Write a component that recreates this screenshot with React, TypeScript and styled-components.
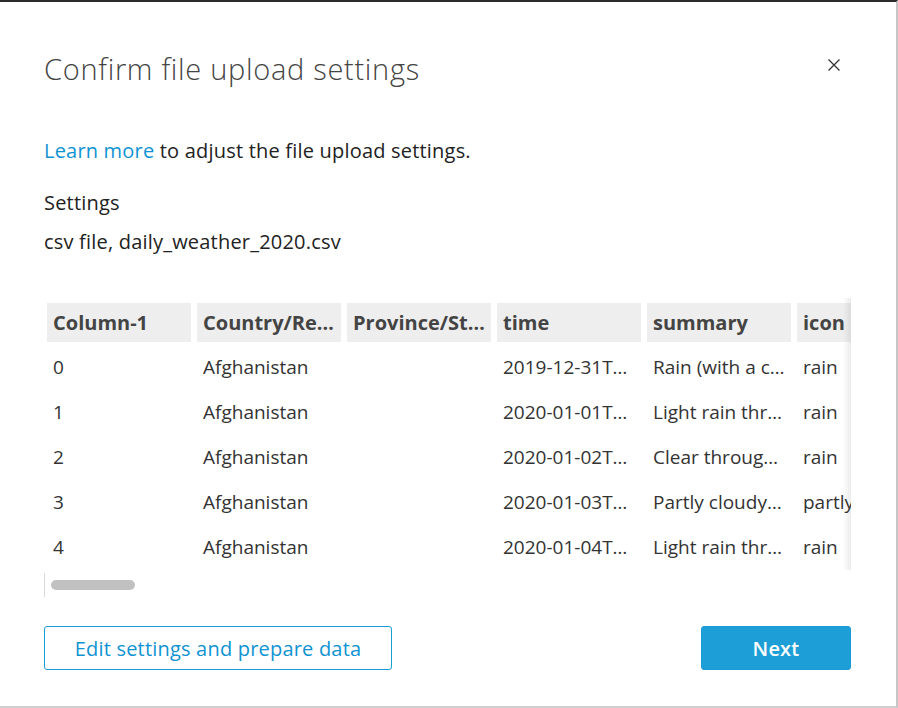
import styled, { createGlobalStyle } from "styled-components";

const GlobalStyle = createGlobalStyle`
html, body {
  margin: 0;
  padding: 0;
  background: #ffffff;
}
* {
  box-sizing: border-box;
}
`

const Modal = styled.div`
width: 898px;
height: 708px;
border-top: 2px solid #2b2b2b;
border-right: 2px solid #c6c6c6;
border-bottom: 2px solid #cfcfcf;
background: #fff;
font-family: "Open Sans", "Noto Sans", sans-serif;
color: #222;
display: flex;
flex-direction: column;
padding: 0 45px 0 44px;
`
const Header = styled.div`
display: flex;
align-items: center;
justify-content: space-between;
height: 38px;
margin-top: 47px;
`
const Title = styled.h1`
margin: 0;
font-size: 29px;
font-weight: 300;
color: #444;
letter-spacing: 0.7px;
`
const CloseButton = styled.button`
border: none;
background: none;
padding: 0;
margin: 0 10px 6px 0;
cursor: pointer;
display: flex;
`
const Intro = styled.p`
margin: 50px 0 0;
font-size: 20px;
line-height: 28px;
letter-spacing: 0.2px;
`
const Link = styled.a`
color: #0f93d2;
text-decoration: none;
`
const Label = styled.div<{ $top: number }>`
margin-top: ${p => p.$top}px;
font-size: 20px;
line-height: 26px;
letter-spacing: 0.2px;
`
const TableArea = styled.div`
position: relative;
margin-top: 43px;
margin-left: 3px;
width: 804px;
height: 272px;
overflow: hidden;
`
const Shadow = styled.div`
position: absolute;
top: 0;
right: 0;
width: 8px;
height: 272px;
background: linear-gradient(to right, rgba(0,0,0,0), rgba(0,0,0,0.08));
`
const Grid = styled.div`
display: grid;
grid-template-columns: repeat(7, 144px);
column-gap: 6px;
padding-top: 5px;
`
const HeadCell = styled.div`
background: #eeeeee;
height: 39px;
line-height: 39px;
padding: 0 6px;
font-size: 20px;
font-weight: 700;
color: #444;
white-space: nowrap;
overflow: hidden;
text-overflow: ellipsis;
margin-bottom: 3px;
`
const Cell = styled.div`
height: 45px;
line-height: 45px;
padding: 0 6px;
font-size: 19px;
color: #333;
white-space: nowrap;
overflow: hidden;
text-overflow: ellipsis;
`
const ScrollRow = styled.div`
display: flex;
align-items: center;
height: 24px;
margin-top: 3px;
border-left: 1px solid #d8d8d8;
padding-left: 6px;
`
const Thumb = styled.div`
width: 84px;
height: 10px;
border-radius: 5px;
background: #c1c1c1;
`
const Footer = styled.div`
display: flex;
justify-content: space-between;
margin-top: 29px;
`
const Button = styled.button<{ $primary?: boolean }>`
height: 44px;
width: ${p => p.$primary ? "150px" : "348px"};
border-radius: 3px;
border: 1px solid #1a9cd6;
background: ${p => p.$primary ? "#1e9ed6" : "#fff"};
color: ${p => p.$primary ? "#fff" : "#0f93d2"};
font-family: "Open Sans", "Noto Sans", sans-serif;
font-size: 20px;
letter-spacing: 0.2px;
font-weight: ${p => p.$primary ? 600 : 400};
cursor: pointer;
`

const columns = ["Column-1", "Country/Region", "Province/State", "time", "summary", "icon", "precipIntensity"]

const rows = [
    ["0", "Afghanistan", "", "2019-12-31T00:00:00", "Rain (with a chance of snow)", "rain", "0.01"],
    ["1", "Afghanistan", "", "2020-01-01T00:00:00", "Light rain throughout the day", "rain", "0.02"],
    ["2", "Afghanistan", "", "2020-01-02T00:00:00", "Clear throughout the day", "rain", "0.00"],
    ["3", "Afghanistan", "", "2020-01-03T00:00:00", "Partly cloudy throughout the day", "partly-cloudy-day", "0.00"],
    ["4", "Afghanistan", "", "2020-01-04T00:00:00", "Light rain throughout the day", "rain", "0.01"],
]

const App = () => {
    return <>
        <GlobalStyle />
        <Modal>
            <Header>
                <Title>Confirm file upload settings</Title>
                <CloseButton aria-label="Close">
                    <svg width="14" height="14" viewBox="0 0 14 14">
                        <path d="M1.5 1.5 L12.5 12.5 M12.5 1.5 L1.5 12.5" stroke="#333" strokeWidth="1.3" fill="none" />
                    </svg>
                </CloseButton>
            </Header>
            <Intro><Link href="#">Learn more</Link> to adjust the file upload settings.</Intro>
            <Label $top={25}>Settings</Label>
            <Label $top={13}>csv file, daily_weather_2020.csv</Label>
            <TableArea>
                <Grid>
                    {columns.map(c => <HeadCell key={c}>{c}</HeadCell>)}
                    {rows.map((r, i) => r.map((v, j) => <Cell key={i + "-" + j}>{v}</Cell>))}
                </Grid>
                <Shadow />
            </TableArea>
            <ScrollRow><Thumb /></ScrollRow>
            <Footer>
                <Button>Edit settings and prepare data</Button>
                <Button $primary>Next</Button>
            </Footer>
        </Modal>
    </>
}

export default App
